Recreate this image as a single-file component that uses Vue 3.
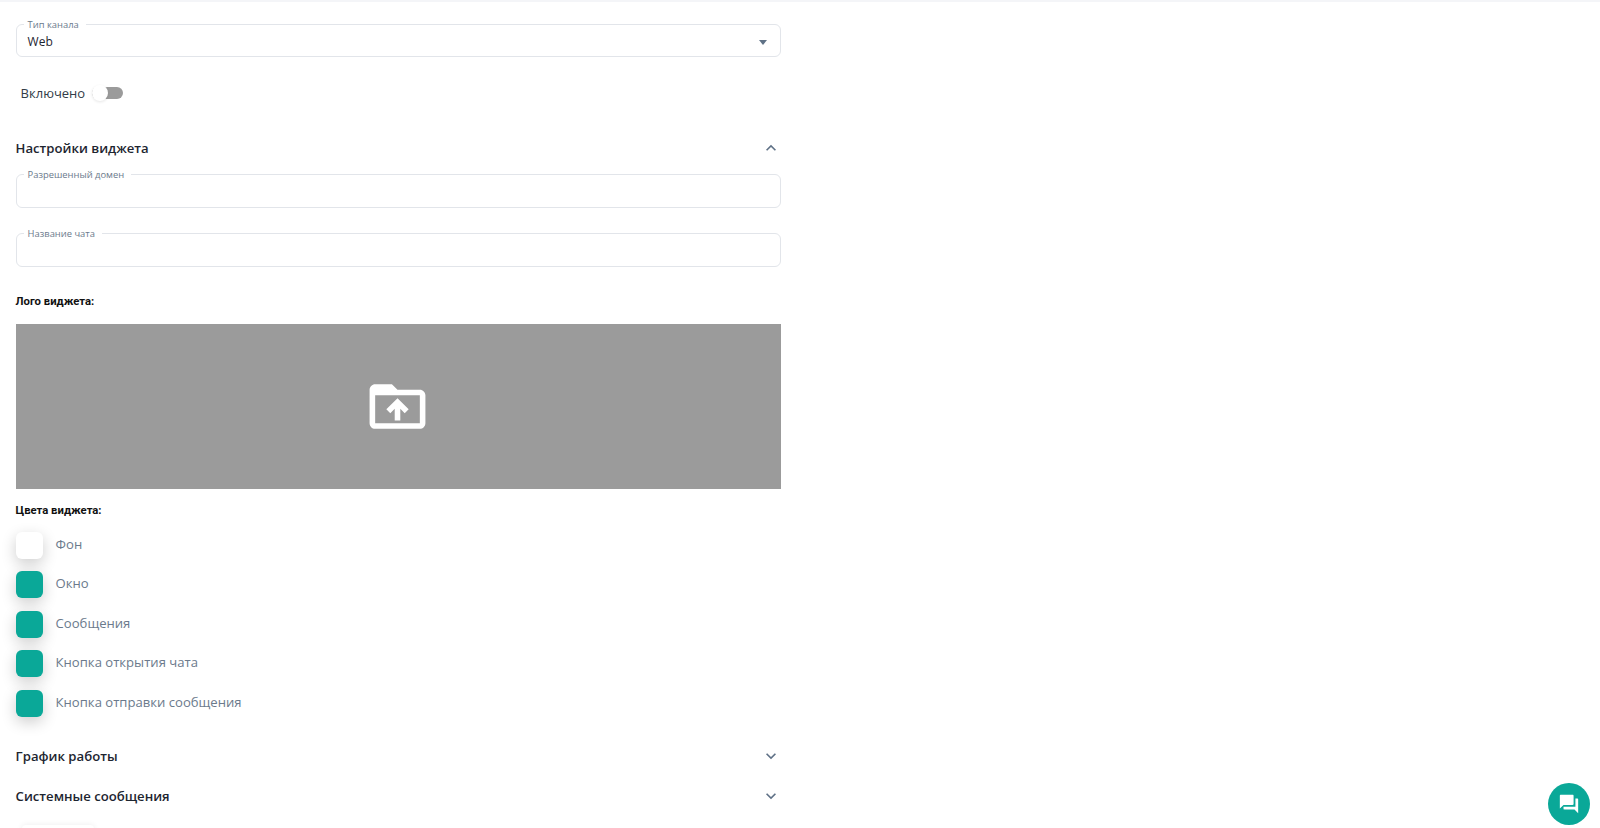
<script setup>
const colors = [
  { name: 'Фон', color: '#ffffff' },
  { name: 'Окно', color: '#0aa898' },
  { name: 'Сообщения', color: '#0aa898' },
  { name: 'Кнопка открытия чата', color: '#0aa898' },
  { name: 'Кнопка отправки сообщения', color: '#0aa898' }
]
</script>

<template>
  <div class="page">
    <div class="form">
      <fieldset class="field select-field">
        <legend>Тип канала</legend>
        <span class="value">Web</span>
        <span class="caret"></span>
      </fieldset>

      <div class="switch-row">
        <span class="switch-label">Включено</span>
        <span class="switch"><span class="knob"></span></span>
      </div>

      <div class="section-head first">
        <span>Настройки виджета</span>
        <svg width="20" height="20" viewBox="0 0 24 24"><path d="M7.4 15.4 12 10.8l4.6 4.6L18 14l-6-6-6 6z" fill="#5f7186" /></svg>
      </div>

      <fieldset class="field text-field">
        <legend>Разрешенный домен</legend>
      </fieldset>
      <fieldset class="field text-field second">
        <legend>Название чата</legend>
      </fieldset>

      <div class="sub-title logo-title">Лого виджета:</div>
      <div class="upload">
        <svg width="67" height="67" viewBox="0 0 24 24">
          <path d="M20 6h-8l-2-2H4c-1.1 0-2 .9-2 2v12c0 1.100.9 2 2 2h16c1.100 0 2-.9 2-2V8c0-1.100-.9-2-2-2zm0 12H4V8h16v10zM8 13.010l1.410 1.410L11 12.840V17h2v-4.160l1.590 1.590L16 13.010 12.010 9 8 13.010z" fill="#fff" />
        </svg>
      </div>

      <div class="sub-title colors-title">Цвета виджета:</div>
      <div class="colors">
        <div v-for="item in colors" :key="item.name" class="color-row">
          <span class="swatch" :style="{ background: item.color }"></span>
          <span class="color-name">{{ item.name }}</span>
        </div>
      </div>

      <div class="section-head closed">
        <span>График работы</span>
        <svg width="20" height="20" viewBox="0 0 24 24"><path d="M7.4 8.600 12 13.200l4.600-4.600L18 10l-6 6-6-6z" fill="#5f7186" /></svg>
      </div>
      <div class="section-head closed second-closed">
        <span>Системные сообщения</span>
        <svg width="20" height="20" viewBox="0 0 24 24"><path d="M7.4 8.600 12 13.200l4.600-4.600L18 10l-6 6-6-6z" fill="#5f7186" /></svg>
      </div>
      <div class="save-btn"></div>
    </div>

    <div class="chat-btn">
      <svg width="22" height="22" viewBox="0 0 24 24">
        <path d="M21 6h-2v9H6v2c0 .55.45 1 1 1h11l4 4V7c0-.55-.45-1-1-1zm-4 6V3c0-.55-.45-1-1-1H3c-.55 0-1 .45-1 1v14l4-4h10c.55 0 1-.45 1-1z" fill="#fff" />
      </svg>
    </div>
  </div>
</template>

<style>
html, body {
  margin: 0;
  background: #fff;
  overflow: hidden;
}
</style>

<style scoped>
.page {
  height: 828px;
  overflow: hidden;
  position: relative;
  box-sizing: border-box;
  border-top: 2px solid #f4f5f8;
  background: #fff;
  font-family: "Open Sans", sans-serif;
}

.form {
  width: 765px;
  margin-left: 15.600px;
  padding-top: 16px;
}

.field {
  margin: 0;
  padding: 0 11px;
  border: 1px solid #e2e5ea;
  border-radius: 6px;
  box-sizing: border-box;
  min-width: 0;
  position: relative;
}

.field legend {
  padding: 0 7px 0 4px;
  margin-left: -4px;
  font-size: 9.400px;
  line-height: 13px;
  color: #6b7a8c;
  font-family: "Open Sans", sans-serif;
}

.select-field {
  height: 39px;
  display: flex;
  align-items: center;
}

.value {
  font-size: 12px;
  line-height: 18px;
  color: #1d2530;
  margin-top: -3px;
}

.caret {
  position: absolute;
  right: 13px;
  top: 9px;
  border-left: 4.500px solid transparent;
  border-right: 4.500px solid transparent;
  border-top: 5px solid #5f7186;
}

.switch-row {
  display: flex;
  align-items: center;
  margin-top: 26px;
  padding-left: 5px;
  height: 20px;
}

.switch-label {
  font-size: 13px;
  color: #333c48;
}

.switch {
  width: 31px;
  height: 12px;
  margin-left: 7px;
  border-radius: 6px;
  background: #9b9b9b;
  position: relative;
}

.knob {
  position: absolute;
  left: 0;
  top: -2px;
  width: 16px;
  height: 16px;
  border-radius: 50%;
  background: #fff;
  box-shadow: 0 1px 3px rgba(0, 0, 0, 0.1);
}

.section-head {
  display: flex;
  align-items: center;
  justify-content: space-between;
  font-size: 13.150px;
  font-weight: 600;
  color: #1d2530;
  height: 24px;
}

.section-head.first {
  margin-top: 33px;
}

.text-field {
  height: 40px;
  margin-top: 8px;
}

.text-field.second {
  margin-top: 19px;
}

.sub-title {
  font-family: Roboto, sans-serif;
  font-size: 11.300px;
  font-weight: 700;
  line-height: 16px;
  color: #111;
}

.logo-title {
  margin-top: 27px;
}

.upload {
  height: 165px;
  margin-top: 14px;
  padding-right: 2px;
  box-sizing: border-box;
  background: #9b9b9b;
  display: flex;
  align-items: center;
  justify-content: center;
}

.colors-title {
  margin-top: 14px;
}

.colors {
  display: flex;
  flex-direction: column;
  gap: 12.400px;
  margin-top: 13px;
}

.color-row {
  display: flex;
  align-items: center;
  gap: 13px;
  height: 27px;
}

.swatch {
  width: 27px;
  height: 27px;
  border-radius: 6px;
  box-shadow: 0 5px 15px rgba(0, 0, 0, 0.2);
}

.color-name {
  font-size: 13.100px;
  color: #6b7a8c;
  margin-bottom: 3px;
}

.section-head.closed {
  margin-top: 27px;
}

.section-head.second-closed {
  margin-top: 16px;
}

.save-btn {
  width: 72px;
  height: 30px;
  margin-top: 17px;
  margin-left: 6px;
  background: #fff;
  box-shadow: 0 0 6px rgba(0, 0, 0, 0.08);
  border-radius: 4px;
}

.chat-btn {
  position: absolute;
  left: 1548px;
  top: 781px;
  width: 42px;
  height: 42px;
  border-radius: 50%;
  background: #0aa898;
  display: flex;
  align-items: center;
  justify-content: center;
}
</style>
